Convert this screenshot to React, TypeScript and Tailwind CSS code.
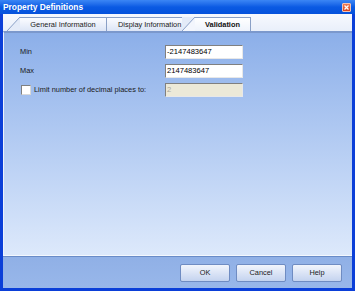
import React from 'react';

const BORDER = '#8aa0c6';
const TAB_FILL = '#e4ebf8';
const SEL_FILL = '#f3f6fd';

function Slant({ fill, left }: { fill: string; left: string }) {
  return (
    <svg width="13" height="14" className="block shrink-0">
      <polygon points="0,0 13,0 0,14" fill={left} />
      <polygon points="0,14 13,0 13,14" fill={fill} />
      <line x1="0" y1="14" x2="13" y2="0" stroke={BORDER} strokeWidth="1" />
    </svg>
  );
}

function CloseButton() {
  return (
    <div className="w-[9px] h-[9px] rounded-[1px] border border-[#f3c3b3] bg-gradient-to-b from-[#ef7b55] to-[#d9421b] flex items-center justify-center">
      <svg width="7" height="7" viewBox="0 0 7 7">
        <path d="M1.5 1.5 L5.5 5.5 M5.5 1.5 L1.5 5.5" stroke="#ffffff" strokeWidth="1.3" />
      </svg>
    </div>
  );
}

function Field({ value, disabled }: { value: string; disabled?: boolean }) {
  return (
    <div
      className={`h-[14px] w-[78px] border border-t-[#808080] border-l-[#808080] border-r-[#e8e8e8] border-b-[#e8e8e8] flex items-center pl-[1px] text-[7.6px] leading-none ${
        disabled ? 'bg-[#ece9d8] text-[#aca899]' : 'bg-white text-black'
      }`}
    >
      {value}
    </div>
  );
}

function Btn({ label }: { label: string }) {
  return (
    <button className="w-[50px] h-[18px] rounded-[2px] border border-[#6f8cc2] bg-gradient-to-b from-[#f2f5fc] to-[#c4d3ef] text-[7.4px] text-[#1a1a1a] leading-none">
      {label}
    </button>
  );
}

export default function App() {
  return (
    <div className="w-[355px] h-[291px] flex flex-col bg-[#0b3fd8] font-['Liberation_Sans',Arial,sans-serif] overflow-hidden">
      {/* Title bar */}
      <div className="h-[14px] shrink-0 flex items-center justify-between pl-[3px] pr-[4px] bg-gradient-to-b from-[#3b86f5] via-[#0a5ae3] to-[#0652dc]">
        <span className="text-[8.4px] font-bold text-white leading-none">Property Definitions</span>
        <CloseButton />
      </div>

      <div className="flex-1 flex flex-col mx-[3px] mb-[3px] min-h-0">
        {/* Tab strip */}
        <div className="h-[17px] shrink-0 flex items-end pl-[4px] bg-gradient-to-b from-[#f7f9fe] to-[#e9effa]">
          <Slant fill={TAB_FILL} left="transparent" />
          <div className="w-[87px] h-[14px] border-t border-r border-[#8aa0c6] bg-gradient-to-b from-[#fbfcff] to-[#dce5f6] flex items-center justify-center text-[7.4px] text-[#1a1a1a] whitespace-nowrap">
            General Information
          </div>
          <div className="w-[75px] h-[14px] border-t border-[#8aa0c6] bg-gradient-to-b from-[#fbfcff] to-[#dce5f6] flex items-center pl-[11px] text-[7.4px] text-[#1a1a1a] whitespace-nowrap">
            Display Information
          </div>
          <Slant fill={SEL_FILL} left={TAB_FILL} />
          <div className="w-[56px] h-[14px] border-t border-r border-[#8aa0c6] bg-gradient-to-b from-[#ffffff] to-[#eef3fc] flex items-center justify-center text-[7.4px] font-bold text-[#111] whitespace-nowrap">
            Validation
          </div>
        </div>

        {/* Content */}
        <div className="flex-1 flex flex-col border-t-2 border-t-[#7b98cc] border-l border-l-[#eef3fc] border-b border-b-[#f4f8fe] bg-gradient-to-b from-[#8cafe9] to-[#dde9fb]">
          <div className="grid grid-cols-[145px_78px] gap-y-[5px] pl-[16px] pt-[12px] text-[7.4px] text-[#1a1a1a]">
            <div className="h-[14px] flex items-center">Min</div>
            <Field value="-2147483647" />
            <div className="h-[14px] flex items-center">Max</div>
            <Field value="2147483647" />
            <div className="h-[14px] flex items-center gap-[3px] pl-[1px]">
              <div className="w-[10px] h-[10px] bg-white border border-t-[#808080] border-l-[#808080] border-r-[#d8d8d8] border-b-[#d8d8d8]" />
              <span>Limit number of decimal places to:</span>
            </div>
            <Field value="2" disabled />
          </div>
        </div>

        {/* Footer */}
        <div className="h-[32px] shrink-0 border-t border-[#6a8cc8] bg-gradient-to-b from-[#90b0e6] to-[#98b7ea] flex items-center justify-end gap-[6px] pr-[10px]">
          <Btn label="OK" />
          <Btn label="Cancel" />
          <Btn label="Help" />
        </div>
      </div>
    </div>
  );
}
